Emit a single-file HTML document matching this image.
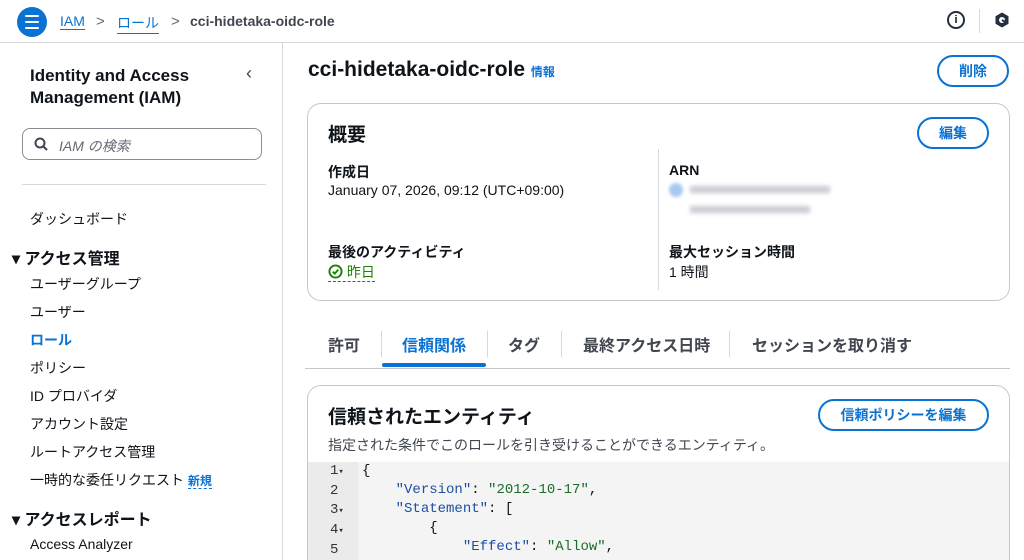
<!DOCTYPE html>
<html><head><meta charset="utf-8"><style>
*{box-sizing:border-box;margin:0;padding:0}
html{width:1024px;height:560px;overflow:hidden}
body{width:1024px;height:560px;overflow:hidden;background:#fff;font-family:"Liberation Sans","Noto Sans CJK JP",sans-serif;color:#0f141a;position:relative}
.a{position:absolute;white-space:nowrap}
.top{position:absolute;left:0;top:0;width:1024px;height:43px;border-bottom:1px solid #d5d9dd;background:#fff}
.side{position:absolute;left:0;top:43px;width:283px;height:517px;border-right:1px solid #d5d9dd}
.nav{font-size:14px;color:#0f141a}
.h{font-size:16px;font-weight:bold}
.btn{position:absolute;border:2px solid #0972d3;border-radius:20px;color:#0972d3;font-weight:bold;font-size:14px;text-align:center;background:#fff}
.card{position:absolute;border:1px solid #c6c6cd;border-radius:14px;background:#fff}
.lbl{font-size:14px;font-weight:bold}
.val{font-size:14px}
.tab{font-size:16px;font-weight:bold;color:#424650}
.code{font-family:"Liberation Mono","DejaVu Sans Mono",monospace;font-size:14px}
.s{color:#1d6b2b}.k{color:#1c4fa0}
</style></head><body>
<div class="top">
 <div class="a" style="left:17px;top:7px;width:30px;height:30px;border-radius:50%;background:#0972d3"></div>
 <div class="a" style="left:25px;top:15px;width:14px;height:2px;background:#fff;box-shadow:0 6px 0 #fff,0 12px 0 #fff;border-radius:1px"></div>
 <div class="a" style="left:60px;top:13px;font-size:14px;color:#0972d3;border-bottom:1px solid #0972d3">IAM</div>
 <div class="a" style="left:96px;top:13px;font-size:15px;color:#656871">&gt;</div>
 <div class="a" style="left:117px;top:13px;font-size:14px;color:#0972d3;border-bottom:1px solid #0972d3">ロール</div>
 <div class="a" style="left:171px;top:13px;font-size:15px;color:#656871">&gt;</div>
 <div class="a" style="left:190px;top:13px;font-size:14px;font-weight:bold;color:#424650">cci-hidetaka-oidc-role</div>
 <div class="a" style="left:947px;top:11px;width:18px;height:18px;border:2px solid #232f3e;border-radius:50%;font-size:11px;font-weight:bold;text-align:center;line-height:14px">i</div>
 <div class="a" style="left:979px;top:9px;width:1px;height:24px;background:#d5d9dd"></div>
 <svg class="a" style="left:993px;top:11px" width="18" height="18" viewBox="0 0 18 18"><path d="M9 1.5 15.5 5.2v7.6L9 16.5 2.5 12.8V5.2Z" fill="#232f3e"/><circle cx="9" cy="9" r="3" fill="#fff"/><path d="M9 9 14 12" stroke="#232f3e" stroke-width="2"/></svg>
</div>
<div class="side">
 <div class="a" style="left:30px;top:22px;font-size:17px;font-weight:bold;line-height:22px">Identity and Access<br>Management (IAM)</div>
 <div class="a" style="left:246px;top:20px;font-size:18px;color:#424650">‹</div>
 <div class="a" style="left:22px;top:85px;width:240px;height:32px;border:1px solid #8c8c94;border-radius:8px"></div>
 <svg class="a" style="left:34px;top:94px" width="14" height="14" viewBox="0 0 14 14"><circle cx="6" cy="6" r="4.5" stroke="#424650" stroke-width="2" fill="none"/><path d="M9.5 9.5 13 13" stroke="#424650" stroke-width="2"/></svg>
 <div class="a" style="left:59px;top:93px;font-size:14px;font-style:italic;color:#656871">IAM の検索</div>
 <div class="a" style="left:22px;top:141px;width:244px;height:1px;background:#d5d9dd"></div>
 <div class="a nav" style="left:30px;top:166px">ダッシュボード</div>
 <div class="a h" style="left:12px;top:202px">▾ アクセス管理</div>
 <div class="a nav" style="left:30px;top:231px">ユーザーグループ</div>
 <div class="a nav" style="left:30px;top:259px">ユーザー</div>
 <div class="a nav" style="left:30px;top:287px;color:#0972d3;font-weight:bold">ロール</div>
 <div class="a nav" style="left:30px;top:315px">ポリシー</div>
 <div class="a nav" style="left:30px;top:343px">ID プロバイダ</div>
 <div class="a nav" style="left:30px;top:371px">アカウント設定</div>
 <div class="a nav" style="left:30px;top:399px">ルートアクセス管理</div>
 <div class="a nav" style="left:30px;top:427px">一時的な委任リクエスト <span style="font-size:12px;color:#0972d3;font-weight:bold;border-bottom:1px dashed #0972d3">新規</span></div>
 <div class="a h" style="left:12px;top:463px">▾ アクセスレポート</div>
 <div class="a nav" style="left:30px;top:493px">Access Analyzer</div>
</div>
<div class="a" style="left:308px;top:58px;font-size:21px;font-weight:bold">cci-hidetaka-oidc-role <span style="font-size:12px;color:#0972d3">情報</span></div>
<div class="btn" style="left:937px;top:55px;width:72px;height:32px;line-height:28px">削除</div>
<div class="card" style="left:307px;top:103px;width:703px;height:198px">
 <div class="a" style="left:20px;top:16px;font-size:19px;font-weight:bold">概要</div>
 <div class="btn" style="left:609px;top:13px;width:72px;height:32px;line-height:28px">編集</div>
 <div class="a lbl" style="left:20px;top:58px">作成日</div>
 <div class="a val" style="left:20px;top:78px">January 07, 2026, 09:12 (UTC+09:00)</div>
 <div class="a lbl" style="left:20px;top:138px">最後のアクティビティ</div>
 <div class="a val" style="left:20px;top:158px;color:#1d8102;border-bottom:1px dashed #1d8102;height:20px"><svg width="15" height="15" viewBox="0 0 16 16" style="vertical-align:-2px"><circle cx="8" cy="8" r="6.5" stroke="#1d8102" stroke-width="2" fill="none"/><path d="M5 8.2 7.2 10.3 11 6" stroke="#1d8102" stroke-width="2" fill="none"/></svg> 昨日</div>
 <div class="a" style="left:350px;top:45px;width:1px;height:141px;background:#d5d9dd"></div>
 <div class="a lbl" style="left:361px;top:58px">ARN</div>
 <div class="a" style="left:361px;top:79px;width:14px;height:14px;border-radius:50%;background:#a8c8f0;filter:blur(1.5px)"></div>
 <div class="a" style="left:382px;top:82px;width:140px;height:7px;background:#c8ccd2;filter:blur(2px)"></div>
 <div class="a" style="left:382px;top:102px;width:120px;height:7px;background:#c8ccd2;filter:blur(2px)"></div>
 <div class="a lbl" style="left:361px;top:138px">最大セッション時間</div>
 <div class="a val" style="left:361px;top:158px">1 時間</div>
</div>
<div class="a tab" style="left:328px;top:332px">許可</div>
<div class="a" style="left:381px;top:331px;width:1px;height:26px;background:#d5d9dd"></div>
<div class="a tab" style="left:402px;top:332px;color:#0972d3">信頼関係</div>
<div class="a" style="left:382px;top:363px;width:104px;height:4px;background:#0972d3;border-radius:2px"></div>
<div class="a" style="left:487px;top:331px;width:1px;height:26px;background:#d5d9dd"></div>
<div class="a tab" style="left:508px;top:332px">タグ</div>
<div class="a" style="left:561px;top:331px;width:1px;height:26px;background:#d5d9dd"></div>
<div class="a tab" style="left:583px;top:332px">最終アクセス日時</div>
<div class="a" style="left:729px;top:331px;width:1px;height:26px;background:#d5d9dd"></div>
<div class="a tab" style="left:752px;top:332px">セッションを取り消す</div>
<div class="a" style="left:305px;top:368px;width:705px;height:1px;background:#c6c6cd"></div>
<div class="card" style="left:307px;top:385px;width:703px;height:175px;overflow:hidden;border-bottom:none;border-radius:14px 14px 0 0">
 <div class="a" style="left:20px;top:16px;font-size:19px;font-weight:bold">信頼されたエンティティ</div>
 <div class="btn" style="left:510px;top:13px;width:171px;height:32px;line-height:28px">信頼ポリシーを編集</div>
 <div class="a" style="left:20px;top:49px;font-size:14px;color:#424650">指定された条件でこのロールを引き受けることができるエンティティ。</div>
 <div class="a" style="left:0;top:76px;width:703px;height:100px;background:#f4f4f4"></div>
 <div class="a" style="left:0;top:76px;width:50px;height:100px;background:#ebebeb"></div>
 <div class="a code" style="left:22px;top:76px;line-height:19px;color:#333">1<span style="font-size:9px">▾</span><br>2<br>3<span style="font-size:9px">▾</span><br>4<span style="font-size:9px">▾</span><br>5</div>
 <div class="a code" style="left:54px;top:76px;line-height:19px;color:#111">{<br>&nbsp;&nbsp;&nbsp;&nbsp;<span class="k">"Version"</span>: <span class="s">"2012-10-17"</span>,<br>&nbsp;&nbsp;&nbsp;&nbsp;<span class="k">"Statement"</span>: [<br>&nbsp;&nbsp;&nbsp;&nbsp;&nbsp;&nbsp;&nbsp;&nbsp;{<br>&nbsp;&nbsp;&nbsp;&nbsp;&nbsp;&nbsp;&nbsp;&nbsp;&nbsp;&nbsp;&nbsp;&nbsp;<span class="k">"Effect"</span>: <span class="s">"Allow"</span>,</div>
</div>
</body></html>
